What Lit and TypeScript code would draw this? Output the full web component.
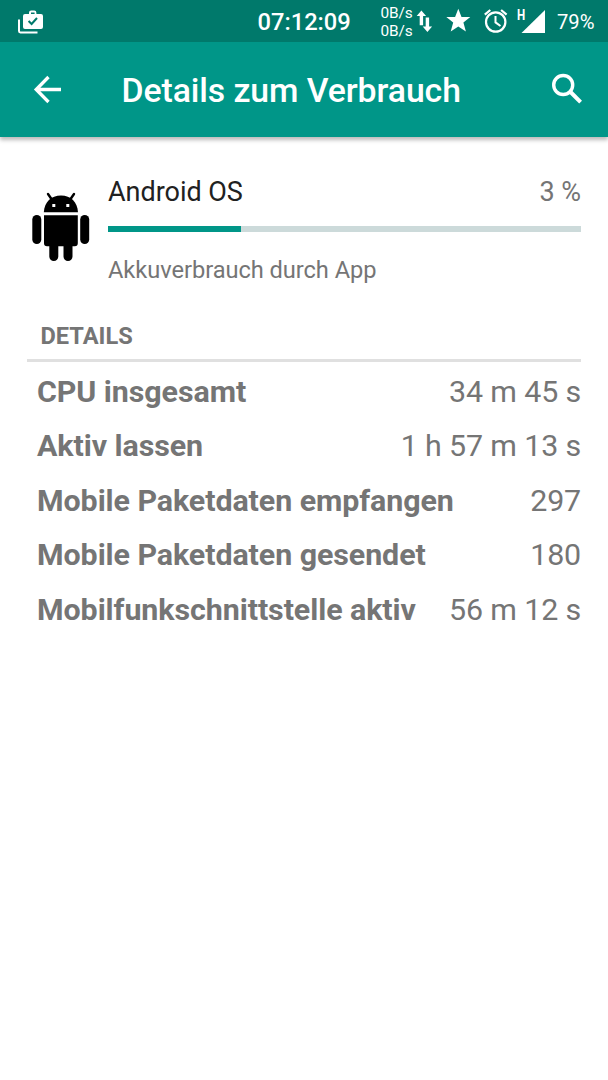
import { LitElement, html, css } from "lit";
import { customElement, property } from "lit/decorators.js";

@customElement("status-bar")
class StatusBar extends LitElement {
  static styles = css`
    :host { display: flex; height: 42px; background: #00796b; color: #fff; }
    svg { display: block; fill: currentColor; flex: none; }
    .shop { margin: 0 0 0 17px; }
    .clock { margin-left: 212.5px; width: 94px; font-size: 23.7px; font-weight: 500; line-height: 45px; white-space: nowrap; }
    .net { margin-left: 29px; width: 33px; padding-top: 5px; font-size: 15.4px; line-height: 17.5px; letter-spacing: -0.1px; white-space: nowrap; }
    .arrows { margin-left: -0.5px; }
    .kind { width: 12px; font-size: 14.5px; font-weight: 700; line-height: 31px; transform: scaleX(0.8); transform-origin: 0 0; }
    .pct { margin-left: 10px; font-size: 20.2px; line-height: 45px; white-space: nowrap; }
  `;
  render() {
    return html`
      <svg class="shop" width="28" height="42" viewBox="17 0 28 42">
        <path d="M19 19.5V31a1.4 1.4 0 0 0 1.4 1.4H37.5" fill="none" stroke="#fff" stroke-width="2" />
        <path fill-rule="evenodd" d="M29 14v-1.2a2.2 2.2 0 0 1 2.2-2.2h3a2.2 2.2 0 0 1 2.2 2.2V14H41a2 2 0 0 1 2 2V27a2 2 0 0 1-2 2H25a2 2 0 0 1-2-2V16a2 2 0 0 1 2-2zM31 14h3.6v-1.4H31z" />
        <path d="M28.6 21l3 3L37 18" fill="none" stroke="#00796b" stroke-width="2" />
      </svg>
      <div class="clock">07:12:09</div>
      <div class="net">0B/s<br />0B/s</div>
      <svg class="arrows" width="104" height="42" viewBox="413 0 104 42">
        <path d="M421.4 10.5l4.7 5.5h-3v9.3h-3.4V16h-3zM427.4 32l-4.7-5.5h3v-9h3.4v9h3z" />
        <path d="M458.3 8.7l3.2 8.2h8.8l-6.9 5.7 2.5 9-7.6-5.1-7.6 5.1 2.5-9-6.9-5.7h8.8z" />
        <g fill="none" stroke="#fff" stroke-width="2.2">
          <circle cx="495.7" cy="22" r="9.7" />
          <path d="M495.5 16v6.4l5 3.6" stroke-width="2" />
          <path d="M484.8 14.7l5.5-4.7M506.6 14.7l-5.5-4.7" />
        </g>
      </svg>
      <div class="kind">H</div>
      <svg width="18" height="42" viewBox="529 0 18 42" overflow="visible">
        <path d="M545 10v23h-23.5z" />
      </svg>
      <div class="pct">79%</div>
    `;
  }
}

@customElement("tool-bar")
class ToolBar extends LitElement {
  @property() heading = "";
  static styles = css`
    :host { display: flex; height: 95px; background: #009688; color: #fff; box-shadow: 0 3px 4px rgba(0, 0, 0, 0.27); clip-path: inset(0 0 -12px 0); }
    svg { display: block; flex: none; fill: none; stroke: currentColor; }
    h1 { margin: 0 0 0 49.5px; flex: 1; font-size: 33.8px; font-weight: 500; line-height: 98px; letter-spacing: -0.09px; white-space: nowrap; }
    .search { margin-right: 22px; }
  `;
  render() {
    return html`
      <svg width="72" height="95" viewBox="0 42 72 95"><path d="M61 89.5H36.5M48.5 77L36.2 89.5L48.5 102" stroke-width="3.3" /></svg>
      <h1>${this.heading}</h1>
      <svg class="search" width="36" height="95" viewBox="550 42 36 95">
        <circle cx="563.2" cy="85" r="9.5" stroke-width="3.4" />
        <path d="M570 91.5l10.6 10.7" stroke-width="4" />
      </svg>
    `;
  }
}

@customElement("app-root")
class AppRoot extends LitElement {
  private share = 28.1;
  private rows = [
    ["CPU insgesamt", "34 m 45 s"],
    ["Aktiv lassen", "1 h 57 m 13 s"],
    ["Mobile Paketdaten empfangen", "297"],
    ["Mobile Paketdaten gesendet", "180"],
    ["Mobilfunkschnittstelle aktiv", "56 m 12 s"],
  ];
  static styles = css`
    :host { display: block; height: 1080px; overflow: hidden; background: #fff; font-family: Roboto, sans-serif; color: #757575; }
    .app { display: flex; padding: 36px 27px 0 32px; height: 149px; box-sizing: border-box; }
    .robot { display: block; margin-top: 17px; width: 58px; height: 72px; flex: none; }
    .info { flex: 1; margin-left: 18px; }
    .line { display: flex; justify-content: space-between; font-size: 27px; line-height: 39px; letter-spacing: -0.03px; }
    .name { color: #212121; }
    .track { margin-top: 14px; height: 6px; background: #ccdada; }
    .fill { height: 6px; background: #009688; }
    .sub { margin-top: 22px; font-size: 23.65px; line-height: 32px; letter-spacing: -0.05px; }
    h2 { margin: 33px 27px 0 27px; padding-left: 13.5px; height: 40px; border-bottom: 3px solid #e0e0e0; font-size: 23.6px; line-height: 34px; font-weight: 700; }
    .rows { padding: 2.5px 27px 0 37px; }
    .row { display: flex; justify-content: space-between; height: 54.5px; line-height: 54.5px; font-size: 30.4px; white-space: nowrap; }
    .key { font-weight: 700; letter-spacing: -0.07px; }
    .value { letter-spacing: -0.15px; }
  `;
  render() {
    return html`
      <status-bar></status-bar>
      <tool-bar heading="Details zum Verbrauch"></tool-bar>
      <section class="app">
        <svg class="robot" viewBox="32 190 58 72">
          <path d="M48 194l4.5 6.5M74 194l-4.5 6.5" stroke="#000" stroke-width="2.4" stroke-linecap="round" />
          <path d="M43.8 212.3C44.5 202 51 195.5 61 195.5S77.3 202 78 212.3Z" />
          <path d="M44 215.3h33.8v28a3 3 0 0 1-3 3H47a3 3 0 0 1-3-3z" />
          <rect x="32.3" y="215" width="9" height="29" rx="4.5" />
          <rect x="80.2" y="215" width="9" height="29" rx="4.5" />
          <path d="M49.3 244h9v12.5a4.5 4.5 0 0 1-9 0zM63.5 244h9v12.5a4.5 4.5 0 0 1-9 0z" />
          <path d="M52.3 204h3v3h-3zM66.3 204h3v3h-3z" fill="#fff" />
        </svg>
        <div class="info">
          <div class="line"><span class="name">Android OS</span><span>3 %</span></div>
          <div class="track"><div class="fill" style="width:${this.share}%"></div></div>
          <div class="sub">Akkuverbrauch durch App</div>
        </div>
      </section>
      <h2>DETAILS</h2>
      <div class="rows">
        ${this.rows.map(([k, v]) => html`<div class="row"><span class="key">${k}</span><span class="value">${v}</span></div>`)}
      </div>
    `;
  }
}
